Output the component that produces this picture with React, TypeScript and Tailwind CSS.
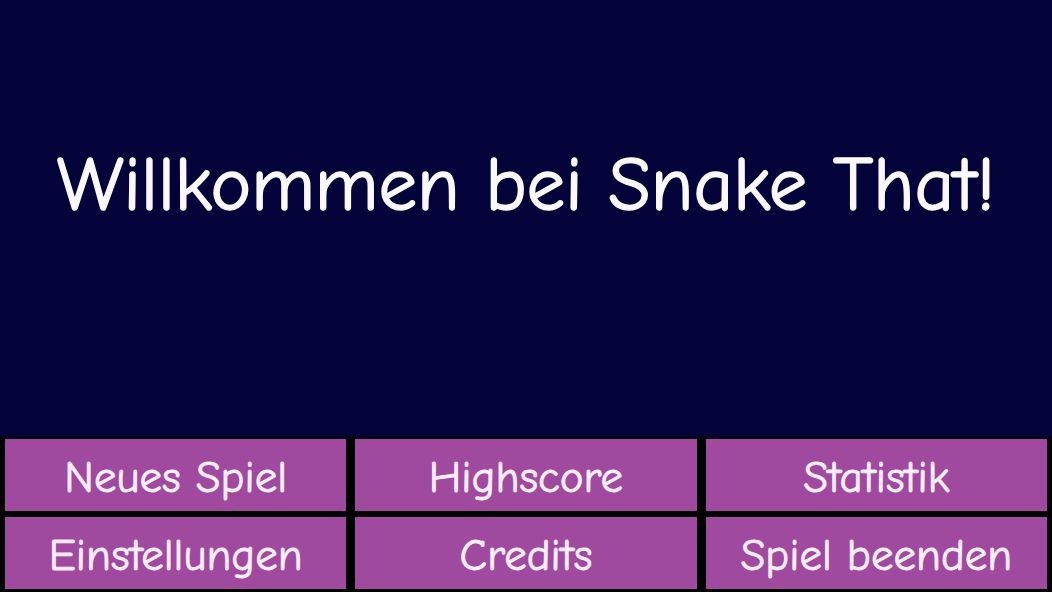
export default function App() {
  const buttons = ['Neues Spiel', 'Highscore', 'Statistik', 'Einstellungen', 'Credits', 'Spiel beenden'];

  return (
    <div
      className="flex h-[592px] w-[1052px] flex-col bg-[#03033a]"
      style={{ fontFamily: '"Comic Sans MS", "Comic Neue", "DejaVu Sans", sans-serif' }}
    >
      {/* Titel */}
      <div className="flex h-[437px] items-start justify-center pt-[135px]">
        <h1 className="whitespace-nowrap text-[77px] leading-[100px] text-[#fbf8fb] [-webkit-text-stroke:1.5px_#fbf8fb]">
          Willkommen bei Snake That!
        </h1>
      </div>

      {/* Menü */}
      <div className="grid flex-1 grid-cols-3 gap-x-[9px] gap-y-[6px] bg-black px-[5px] pt-[2px] pb-[3px]">
        {buttons.map((label) => (
          <button
            key={label}
            className="flex h-[72px] items-center justify-center whitespace-nowrap bg-[#9f4a9f] pt-[4px] text-[45px] leading-[56px] text-[#f9eef9] [-webkit-text-stroke:0.8px_#f9eef9]"
          >
            {label}
          </button>
        ))}
      </div>
    </div>
  );
}
